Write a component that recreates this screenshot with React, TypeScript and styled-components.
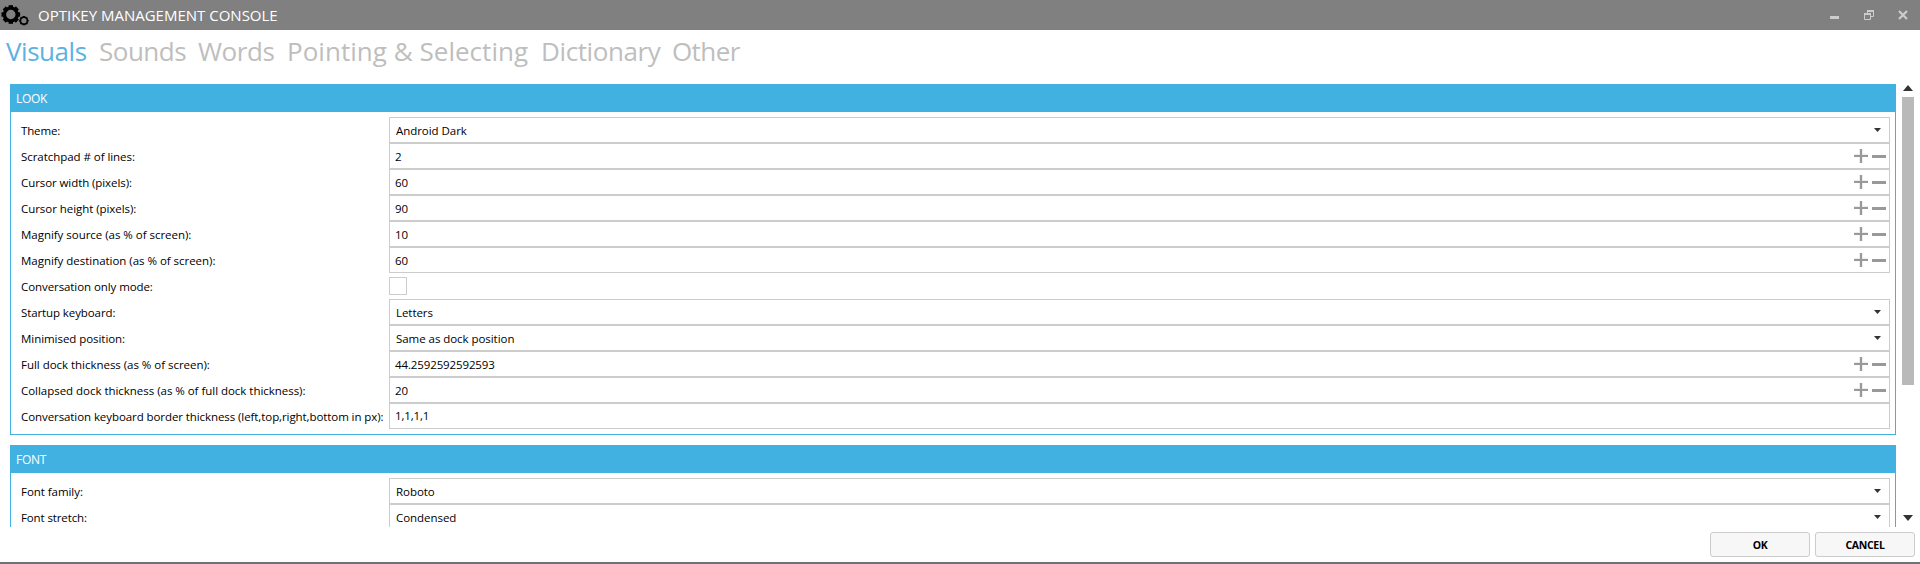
import React from 'react';
import styled, { createGlobalStyle } from 'styled-components';

const Global = createGlobalStyle`
  * { box-sizing: border-box; }
  body { margin: 0; background: #fff; }
`;

const Window = styled.div`
  width: 1920px;
  height: 564px;
  display: flex;
  flex-direction: column;
  overflow: hidden;
  background: #fff;
  border-bottom: 2px solid #6d7277;
  color: #000;
  font: 11.5px/26px 'Open Sans', 'Noto Sans', sans-serif;
  white-space: nowrap;
`;
const TitleBar = styled.header`
  height: 30px;
  flex: none;
  display: flex;
  align-items: center;
  background: #808080;
`;
const Title = styled.h1`
  margin: 0 auto 0 9px;
  font-size: 15px;
  line-height: 30px;
  font-weight: 400;
  color: #fff;
`;
const WindowButtons = styled.div`
  display: flex;
  margin-right: 12px;
  gap: 24px;
`;
const Tabs = styled.nav`
  height: 54px;
  flex: none;
  display: flex;
  padding: 2px 0 0 6px;
`;
const Tab = styled.div<{ $active?: boolean; $width: number; $track: number }>`
  width: ${p => p.$width}px;
  font-size: 26px;
  line-height: 38px;
  letter-spacing: ${p => p.$track}px;
  color: ${p => (p.$active ? '#5cb3e2' : '#bebebe')};
`;
const Body = styled.main`
  height: 443px;
  flex: none;
  display: flex;
  overflow: hidden;
`;
const Groups = styled.div`
  width: 1886px;
  margin-left: 10px;
  display: flex;
  flex-direction: column;
  gap: 10px;
`;
const Group = styled.section`
  flex: none;
  border: 1px solid #41b1e1;
`;
const GroupHeader = styled.h2`
  margin: 0;
  height: 27px;
  padding-left: 5px;
  background: #41b1e1;
  color: #fff;
  font-size: 12px;
  line-height: 27px;
  font-weight: 400;
  letter-spacing: -0.3px;
`;
const Rows = styled.div`
  padding: 5px;
`;
const Row = styled.div`
  height: 26px;
  display: flex;
  align-items: center;
`;
const Label = styled.label<{ $track: number }>`
  width: 373px;
  height: 26px;
  padding-left: 5px;
  line-height: 28px;
  letter-spacing: ${p => p.$track}px;
`;
const Field = styled.div<{ $kind: Kind }>`
  flex: 1;
  height: 26px;
  display: flex;
  align-items: center;
  justify-content: space-between;
  border: 1px solid #ccc;
  line-height: ${p => (p.$kind === 'text' ? 24 : 26)}px;
  padding: 0 ${p => (p.$kind === 'select' ? 8 : 3)}px 0 ${p => (p.$kind === 'select' ? 6 : 5)}px;
`;
const Value = styled.span<{ $track: number }>`
  height: 24px;
  letter-spacing: ${p => p.$track}px;
`;
const Check = styled.div`
  width: 18px;
  height: 18px;
  border: 1px solid #ccc;
`;
const ScrollBar = styled.div`
  width: 12px;
  margin-left: 6px;
  display: flex;
  flex-direction: column;
  align-items: center;
`;
const Thumb = styled.div`
  width: 12px;
  height: 288px;
  margin: 6px 0 130px;
  background: #b9b9b9;
`;
const Footer = styled.footer`
  display: flex;
  justify-content: flex-end;
  gap: 5px;
  padding: 5px 5px 0;
`;
const Button = styled.button`
  width: 100px;
  height: 25px;
  padding: 1px 0 0;
  border: 1px solid #ccc;
  border-radius: 3px;
  background: #f7f7f7;
  color: #000;
  font: 700 10.5px/22px 'Open Sans', 'Noto Sans', sans-serif;
  letter-spacing: -0.3px;
`;
const Icon = styled.svg`
  display: block;
  flex: none;
`;

type Kind = 'select' | 'number' | 'text' | 'check';
type Item = { label: string; kind: Kind; value?: string; track?: number; valueTrack?: number };

const look: Item[] = [
  { label: 'Theme:', kind: 'select', value: 'Android Dark', track: -0.15 },
  { label: 'Scratchpad # of lines:', kind: 'number', value: '2' },
  { label: 'Cursor width (pixels):', kind: 'number', value: '60', track: -0.08 },
  { label: 'Cursor height (pixels):', kind: 'number', value: '90' },
  { label: 'Magnify source (as % of screen):', kind: 'number', value: '10', track: -0.03 },
  { label: 'Magnify destination (as % of screen):', kind: 'number', value: '60', track: -0.03 },
  { label: 'Conversation only mode:', kind: 'check', track: -0.08 },
  { label: 'Startup keyboard:', kind: 'select', value: 'Letters', track: -0.1 },
  { label: 'Minimised position:', kind: 'select', value: 'Same as dock position' },
  { label: 'Full dock thickness (as % of screen):', kind: 'number', value: '44.2592592592593', track: -0.03, valueTrack: -0.12 },
  { label: 'Collapsed dock thickness (as % of full dock thickness):', kind: 'number', value: '20', track: -0.03 },
  { label: 'Conversation keyboard border thickness (left,top,right,bottom in px):', kind: 'text', value: '1,1,1,1', track: -0.08, valueTrack: -0.15 },
];
const font: Item[] = [
  { label: 'Font family:', kind: 'select', value: 'Roboto' },
  { label: 'Font stretch:', kind: 'select', value: 'Condensed', track: -0.12 },
];
const tabs = [
  { name: 'Visuals', width: 93, track: -0.45 },
  { name: 'Sounds', width: 99, track: -0.5 },
  { name: 'Words', width: 89, track: -0.45 },
  { name: 'Pointing & Selecting', width: 254, track: 0.03 },
  { name: 'Dictionary', width: 131, track: -0.4 },
  { name: 'Other', width: 80, track: -0.6 },
];

function gear(cx: number, cy: number, r: number, body: number, tooth: number) {
  return (
    <g>
      <circle cx={cx} cy={cy} r={body} fill="none" stroke="#000" strokeWidth={r * 0.36} />
      {[0, 45, 90, 135, 180, 225, 270, 315].map(a => (
        <rect key={a} x={cx - tooth / 2} y={cy - r} width={tooth} height={r * 0.35} transform={`rotate(${a} ${cx} ${cy})`} />
      ))}
    </g>
  );
}

const Gears = () => (
  <Icon width="29" height="30" viewBox="0 0 29 30">
    {gear(10.8, 14.5, 9.3, 6.4, 4.4)}
    {gear(23.9, 20.7, 4.7, 3.5, 1.8)}
  </Icon>
);
const Drop = () => (
  <Icon width="7" height="4" viewBox="0 0 7 4"><path d="M0 0H7L3.5 4Z" fill="#333" /></Icon>
);
const Spin = () => (
  <Icon width="32" height="14" viewBox="0 0 32 14">
    <path d="M5 0H9V5H14V8H9V14H5V8H0V5H5Z" fill="#ececec" />
    <path d="M6 0H8V6H14V8H8V14H6V8H0V6H6ZM18 6H32V9H18Z" fill="#999" />
  </Icon>
);

function GroupBox({ title, items }: { title: string; items: Item[] }) {
  return (
    <Group>
      <GroupHeader>{title}</GroupHeader>
      <Rows>
        {items.map(i => (
          <Row key={i.label}>
            <Label $track={i.track ?? -0.05}>{i.label}</Label>
            {i.kind === 'check' ? <Check /> : (
              <Field $kind={i.kind}>
                <Value $track={i.valueTrack ?? -0.05}>{i.value}</Value>
                {i.kind === 'select' && <Drop />}
                {i.kind === 'number' && <Spin />}
              </Field>
            )}
          </Row>
        ))}
      </Rows>
    </Group>
  );
}

export default function App() {
  return (
    <Window>
      <Global />
      <TitleBar>
        <Gears />
        <Title>OPTIKEY MANAGEMENT CONSOLE</Title>
        <WindowButtons>
          <Icon width="10" height="10"><path d="M0 6H9V9H0Z" fill="#ccc" /></Icon>
          <Icon width="10" height="10">
            <path d="M3.5 3V1H9.5V6.5H7" fill="none" stroke="#ccc" />
            <path d="M3 0H10V2H3ZM0 3H7V5H0Z" fill="#ccc" />
            <path d="M.5 4V9.5H6.5V4" fill="none" stroke="#ccc" />
          </Icon>
          <Icon width="10" height="10"><path d="M1 1L9 9M9 1L1 9" stroke="#ccc" strokeWidth="2.2" /></Icon>
        </WindowButtons>
      </TitleBar>
      <Tabs>
        {tabs.map((t, i) => (
          <Tab key={t.name} $active={i === 0} $width={t.width} $track={t.track}>{t.name}</Tab>
        ))}
      </Tabs>
      <Body>
        <Groups>
          <GroupBox title="LOOK" items={look} />
          <GroupBox title="FONT" items={font} />
        </Groups>
        <ScrollBar>
          <Icon width="10" height="7"><path d="M0 7L5 1L10 7Z" fill="#333" /></Icon>
          <Thumb />
          <Icon width="10" height="6"><path d="M0 0H10L5 6Z" fill="#333" /></Icon>
        </ScrollBar>
      </Body>
      <Footer>
        <Button>OK</Button>
        <Button>CANCEL</Button>
      </Footer>
    </Window>
  );
}
